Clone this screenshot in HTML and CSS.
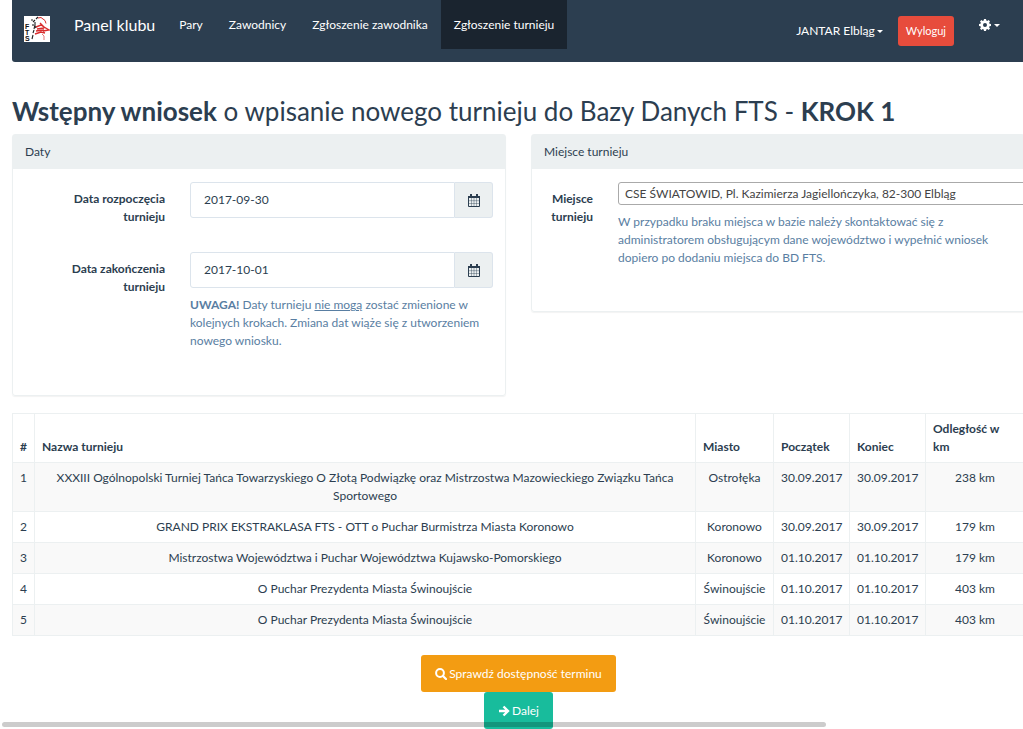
FILE: index.html
```html
<!DOCTYPE html>
<html lang="pl">
<head>
<meta charset="utf-8">
<meta name="viewport" content="width=device-width, initial-scale=1">
<title>Panel klubu</title>
<link rel="stylesheet" href="styles.css">
</head>
<body>
<svg class="sprite" aria-hidden="true">
  <symbol id="calendar" viewBox="0 0 12 13">
    <path fill="currentColor" d="M0 2h12v2H0zM2 0h2v3H2zM8 0h2v3H8z"/>
    <path fill="none" stroke="currentColor" d="M.5 3v9.500h11V3"/>
    <path fill="none" stroke="currentColor" stroke-width=".4" d="M1 6.700h10M1 9.500h10M3.500 4v8M6 4v8M8.500 4v8"/>
  </symbol>
</svg>
<div class="page">
  <nav class="navbar">
    <a class="logo" href="#" aria-label="FTS">
      <svg viewBox="0 0 26 26" width="26" height="26">
        <path fill="#fff" d="M0 0h26v26H0z"/>
        <g class="logo-letters"><text x="1" y="13">F</text><text x="1" y="19">T</text><text x="1" y="25">S</text></g>
        <path fill="none" stroke="#222" stroke-width="1.100" d="M7 4h2M9 6l2-2M12 3l2-2M11 6v3l-1 4M9 8v2M10 14l-1 3M9 19l-1 4M11 10l1 2"/>
        <path fill="none" stroke="#d82c2c" stroke-width="1" d="M14 2l3-.5 4 3 1 3"/>
        <path fill="none" stroke="#d82c2c" stroke-width="1.400" d="M12 11l5-2 3 2 5 3-6 1M13 13l7-1M12 15l8-1M11 18l6-2 4 1M16 7l5 5"/>
        <path fill="none" stroke="#e57a7a" stroke-width="1" d="M18 18l2 2v4"/>
      </svg>
    </a>
    <a class="brand" href="#">Panel klubu</a>
    <a class="nav-link" href="#">Pary</a>
    <a class="nav-link" href="#">Zawodnicy</a>
    <a class="nav-link" href="#">Zgłoszenie zawodnika</a>
    <a class="nav-link active" href="#">Zgłoszenie turnieju</a>
    <div class="account">
      <button class="menu club" type="button">JANTAR Elbląg<span class="caret"></span></button>
      <button class="logout" type="button">Wyloguj</button>
      <button class="menu settings" type="button" aria-label="Ustawienia">
        <svg viewBox="0 0 12 12" width="12" height="12"><path fill="#fff" fill-rule="evenodd" d="M5 0h2l.3 1.600 1 .4L9.600 1 11 2.400l-.9 1.300.4 1L12 5v2l-1.500.3-.4 1L11 9.600 9.600 11l-1.300-.9-1 .4L7 12H5l-.3-1.500-1-.4-1.300.9L1 9.600l.9-1.300-.4-1L0 7V5l1.500-.3.4-1L1 2.400 2.400 1l1.300.9 1-.4zM6 4a2 2 0 1 0 0 4 2 2 0 0 0 0-4z"/></svg>
        <span class="caret"></span>
      </button>
    </div>
  </nav>

  <h1><strong>Wstępny wniosek</strong> o wpisanie nowego turnieju do Bazy Danych FTS - <strong>KROK 1</strong></h1>

  <form>
    <div class="panels">
      <section class="panel dates">
        <h2>Daty</h2>
        <div class="fields">
          <label for="start">Data rozpoczęcia turnieju</label>
          <div class="date">
            <input id="start" type="text" value="2017-09-30">
            <button type="button" aria-label="Wybierz datę rozpoczęcia"><svg width="12" height="13"><use href="#calendar"/></svg></button>
          </div>
          <label for="end">Data zakończenia turnieju</label>
          <div>
            <div class="date">
              <input id="end" type="text" value="2017-10-01">
              <button type="button" aria-label="Wybierz datę zakończenia"><svg width="12" height="13"><use href="#calendar"/></svg></button>
            </div>
            <p class="help"><strong>UWAGA!</strong> Daty turnieju <u>nie mogą</u> zostać zmienione w kolejnych krokach. Zmiana dat wiąże się z utworzeniem nowego wniosku.</p>
          </div>
        </div>
      </section>
      <section class="panel place">
        <h2>Miejsce turnieju</h2>
        <div class="fields">
          <label for="venue">Miejsce turnieju</label>
          <div>
            <select id="venue"><option>CSE ŚWIATOWID, Pl. Kazimierza Jagiellończyka, 82-300 Elbląg</option></select>
            <p class="help">W przypadku braku miejsca w bazie należy skontaktować się z administratorem obsługującym dane województwo i wypełnić wniosek dopiero po dodaniu miejsca do BD FTS.</p>
          </div>
        </div>
      </section>
    </div>

    <table>
      <colgroup><col class="c-num"><col><col class="c-city"><col class="c-date"><col class="c-date"><col class="c-dist"></colgroup>
      <thead>
        <tr><th>#</th><th>Nazwa turnieju</th><th>Miasto</th><th>Początek</th><th>Koniec</th><th>Odległość w km</th></tr>
      </thead>
      <tbody>
        <tr><td>1</td><td>XXXIII Ogólnopolski Turniej Tańca Towarzyskiego O Złotą Podwiązkę oraz Mistrzostwa Mazowieckiego Związku Tańca Sportowego</td><td>Ostrołęka</td><td>30.09.2017</td><td>30.09.2017</td><td>238 km</td></tr>
        <tr><td>2</td><td>GRAND PRIX EKSTRAKLASA FTS - OTT o Puchar Burmistrza Miasta Koronowo</td><td>Koronowo</td><td>30.09.2017</td><td>30.09.2017</td><td>179 km</td></tr>
        <tr><td>3</td><td>Mistrzostwa Województwa i Puchar Województwa Kujawsko-Pomorskiego</td><td>Koronowo</td><td>01.10.2017</td><td>01.10.2017</td><td>179 km</td></tr>
        <tr><td>4</td><td>O Puchar Prezydenta Miasta Świnoujście</td><td>Świnoujście</td><td>01.10.2017</td><td>01.10.2017</td><td>403 km</td></tr>
        <tr><td>5</td><td>O Puchar Prezydenta Miasta Świnoujście</td><td>Świnoujście</td><td>01.10.2017</td><td>01.10.2017</td><td>403 km</td></tr>
      </tbody>
    </table>

    <div class="actions">
      <button class="btn check" type="button"><svg viewBox="0 0 12 12" width="12" height="12"><circle cx="5" cy="5" r="3.900" fill="none" stroke="#fff" stroke-width="2"/><path d="M8 8l3 3" stroke="#fff" stroke-width="2.200" stroke-linecap="round"/></svg>Sprawdź dostępność terminu</button>
      <button class="btn next" type="submit"><svg viewBox="0 0 12 12" width="12" height="12"><path d="M1 6h9M5.500 1.500L10 6l-4.500 4.500" fill="none" stroke="#fff" stroke-width="2.400"/></svg>Dalej</button>
    </div>
  </form>
</div>
<div class="scroll-thumb"></div>
</body>
</html>
```
FILE: styles.css
```css
* { box-sizing: border-box; }
html { overflow: hidden; }
body {
  margin: 0;
  overflow: hidden;
  background: #fff;
  color: #2c3e50;
  font: 12px/18px Lato, "Liberation Sans", sans-serif;
}
button, input, select { font: inherit; color: inherit; margin: 0; }
a { color: #fff; text-decoration: none; }
.sprite { display: none; }
.page { margin: 0 -2px 0 12px; }

.navbar {
  display: flex;
  align-items: flex-start;
  height: 62px;
  padding-left: 12px;
  background: #2c3e50;
  border-radius: 0 0 3px 3px;
  color: #fff;
}
.logo { margin-top: 16px; height: 26px; }
.logo-letters { font: bold 7px "Liberation Sans", sans-serif; fill: #111; }
.brand { padding: 16px 11px 16px 24px; font-size: 16px; }
.nav-link { padding: 16px 13px 15px; }
.nav-link.active { background: #1a242f; }
.account { display: flex; margin-left: auto; padding: 16px 25px 0 0; }
.menu {
  display: flex;
  align-items: center;
  padding: 0;
  border: 0;
  background: none;
  color: #fff;
}
.club { height: 30px; margin-right: 15px; }
.settings { height: 18px; margin-left: 25px; gap: 1px; }
.caret {
  margin-left: 2px;
  border: 3px solid transparent;
  border-top-color: #fff;
  border-bottom: 0;
}
.logout {
  height: 30px;
  padding: 0 8px;
  border: 0;
  border-radius: 3px;
  background: #e74c3c;
  color: #fff;
  font-size: 11px;
}

h1 { margin: 31px 0 5px; font-size: 26px; line-height: 36px; font-weight: 400; }

.panels {
  display: grid;
  grid-template-columns: repeat(2, minmax(0, 1fr));
  gap: 25px;
  align-items: start;
}
.panel { border: 1px solid #ecf0f1; border-radius: 3px; box-shadow: 0 1px 1px rgba(0, 0, 0, .05); }
.panel h2 { margin: 0; padding: 8px 12px; background: #ecf0f1; font-size: 12px; line-height: 18px; font-weight: 400; }
.fields { display: grid; column-gap: 25px; padding: 13px 12px 0; }
.fields label { padding-top: 8px; text-align: right; font-weight: 700; }
.dates .fields { grid-template-columns: 140px minmax(0, 1fr); row-gap: 26px; padding-bottom: 45px; }
.dates label { padding-left: 36px; }
.place .fields { grid-template-columns: 49px minmax(0, 1fr); padding-bottom: 44px; }
.date { display: flex; height: 36px; }
.date input {
  flex: 1;
  min-width: 0;
  padding: 0 13px;
  border: 1px solid #dce4ec;
  border-radius: 3px 0 0 3px;
  background: #fff;
}
.date button {
  display: grid;
  place-items: center;
  width: 38px;
  padding: 0;
  border: 1px solid #dce4ec;
  border-left: 0;
  border-radius: 0 3px 3px 0;
  background: #ecf0f1;
}
.help { margin: 8px 0 0; color: #597ea2; }
select {
  appearance: none;
  display: block;
  width: 480px;
  height: 23px;
  padding: 0 6px;
  border: 1px solid #aaa;
  border-radius: 3px;
  background: #fff;
  color: #444;
}

table { width: 100%; margin-top: 17px; border-collapse: collapse; table-layout: fixed; }
.c-num { width: 22px; }
.c-city { width: 78px; }
.c-date { width: 76px; }
.c-dist { width: 99px; }
th, td { padding: 6px 7px; border: 1px solid #ecf0f1; }
th { text-align: left; vertical-align: bottom; font-weight: 700; }
td { text-align: center; vertical-align: top; }
tbody tr:nth-child(odd) { background: #f9f9f9; }

.actions { display: flex; flex-direction: column; align-items: center; padding-top: 19px; }
.btn {
  display: flex;
  align-items: center;
  gap: 2px;
  height: 37px;
  padding: 0 14px;
  border: 0;
  border-radius: 3px;
  color: #fff;
}
.check { background: #f39c12; }
.next { background: #18bc9c; }

.scroll-thumb {
  position: fixed;
  left: 2px;
  bottom: 2px;
  width: 80.5%;
  height: 5px;
  border-radius: 3px;
  background: rgba(0, 0, 0, .2);
}
```
